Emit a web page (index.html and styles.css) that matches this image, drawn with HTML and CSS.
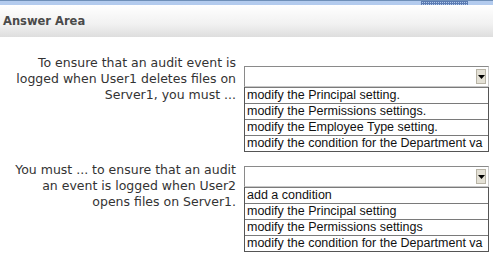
FILE: index.html
```html
<!DOCTYPE html>
<html>
<head>
<link rel="stylesheet" href="styles.css">
</head>
<body>
<div class="topbar">
	<div class="grip"></div>
</div>
<div class="header">Answer Area</div>

<div class="content">
	<div class="question first">
		<div class="label">To ensure that an audit event is<br>logged when User1 deletes files on<br>Server1, you must ...</div>
		<div class="answer">
			<div class="select"><span class="drop"><svg width="7" height="4" viewBox="0 0 7 4"><path d="M0 0h7L3.5 4z" fill="#000"/></svg></span></div>
			<div class="list">
				<div class="item">modify the Principal setting.</div>
				<div class="item">modify the Permissions settings.</div>
				<div class="item">modify the Employee Type setting.</div>
				<div class="item">modify the condition for the Department va</div>
			</div>
		</div>
	</div>

	<div class="question second">
		<div class="label">You must ... to ensure that an audit<br>an event is logged when User2<br>opens files on Server1.</div>
		<div class="answer">
			<div class="select"><span class="drop"><svg width="7" height="4" viewBox="0 0 7 4"><path d="M0 0h7L3.5 4z" fill="#000"/></svg></span></div>
			<div class="list">
				<div class="item">add a condition</div>
				<div class="item">modify the Principal setting</div>
				<div class="item">modify the Permissions settings</div>
				<div class="item">modify the condition for the Department va</div>
			</div>
		</div>
	</div>
</div>
</body>
</html>
```

FILE: styles.css
```css
body {
  margin: 0;
  background-color: #ffffff;
  font-family: "DejaVu Sans", Verdana, sans-serif;
}

.topbar {
  height: 4px;
  background-color: #b3cbee;
  border-top: 1px solid #6f8fb8;
  position: relative;
}
.grip {
  position: absolute;
  left: 421px;
  top: 0;
  width: 47px;
  height: 4px;
  background-image: linear-gradient(90deg, #3f62a0 50%, transparent 50%), linear-gradient(#3f62a0 50%, transparent 50%);
  background-size: 2px 2px;
  opacity: 0.75;
}

.header {
  height: 32px;
  line-height: 32px;
  padding-left: 3px;
  font-size: 11.5px;
  font-weight: bold;
  color: #4a4a4a;
  background: linear-gradient(#ffffff, #f1f1f1 60%, #dedede);
}

.content {
  padding-top: 18px;
}

.question {
  display: flex;
  gap: 8px;
}
.second {
  margin-top: 10px;
}

.label {
  width: 236px;
  text-align: right;
  font-size: 12.5px;
  line-height: 16px;
  color: #333333;
}

.answer {
  width: 245px;
}
.first .answer {
  margin-top: 11px;
}
.second .answer {
  margin-top: 4px;
}

.select {
  height: 19px;
  border: 1px solid #8a8a8a;
  border-right-color: #c8c8c8;
  border-bottom-color: #c8c8c8;
  display: flex;
  justify-content: flex-end;
  align-items: center;
  padding-right: 2px;
  background: #fff;
}
.drop {
  width: 10px;
  height: 15px;
  background: #e4e1d6;
  border: 1px solid #b8b4a6;
  box-sizing: border-box;
  display: flex;
  align-items: center;
  justify-content: center;
}

.list {
  width: 243px;
  border: 1px solid #555555;
  border-top: none;
  overflow: hidden;
}
.item {
  height: 15px;
  line-height: 15px;
  padding-left: 2px;
  border-top: 1px solid #7a7a7a;
  white-space: nowrap;
  font-family: "Liberation Sans", Arial, sans-serif;
  font-size: 12.5px;
  color: #111111;
}
```
